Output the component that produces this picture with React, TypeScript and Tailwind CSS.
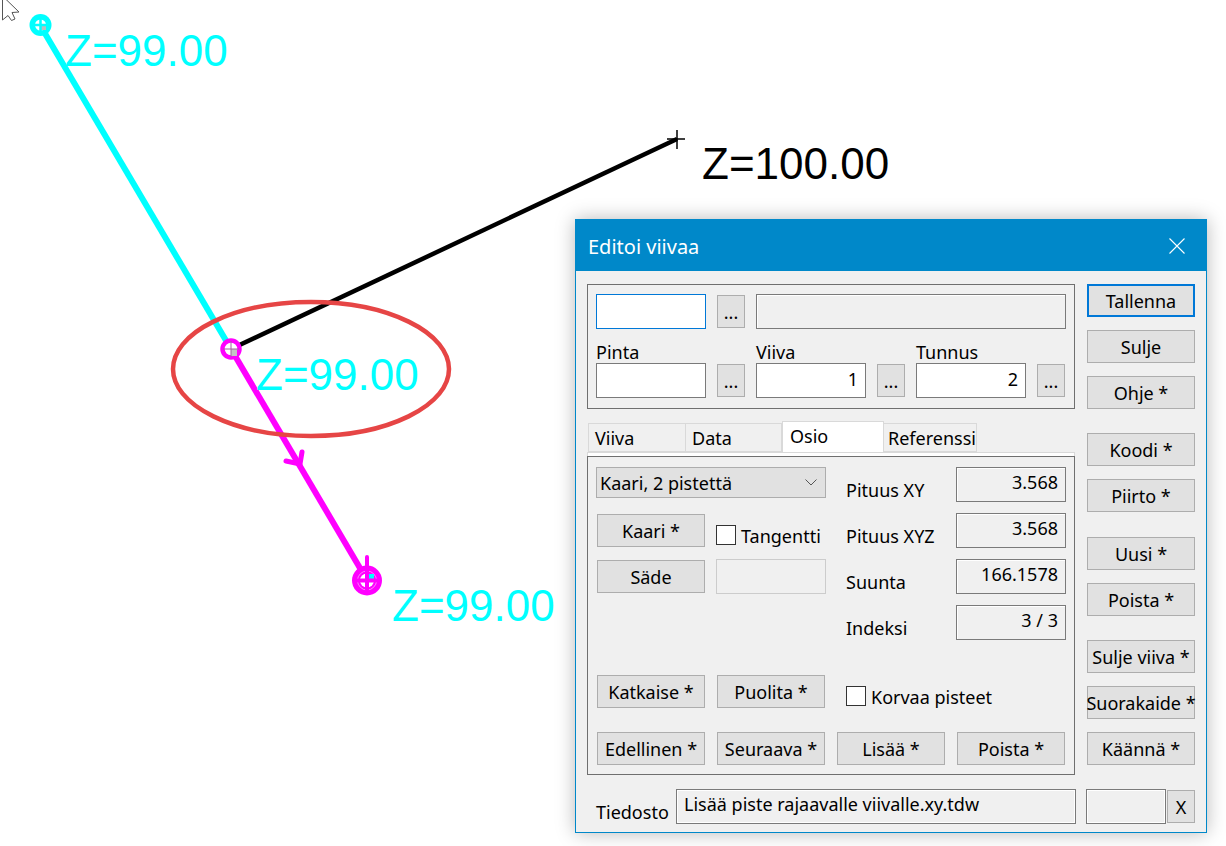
const font = "font-['Noto_Sans',sans-serif]";

function Btn({ label, className = "border border-[#adadad]" }: { label: string; className?: string }) {
  return (
    <div className={`flex h-[33px] w-[108px] shrink-0 items-center justify-center whitespace-nowrap bg-[#e1e1e1] text-[18px] leading-none text-black ${className}`}>
      {label}
    </div>
  );
}

function Dots({ className = "" }: { className?: string }) {
  return (
    <div className={`flex h-[33px] w-[28px] shrink-0 items-center justify-center border border-[#adadad] bg-[#e1e1e1] text-[18px] leading-none text-black ${className}`}>
      ...
    </div>
  );
}

function Input({ value = "", w, className = "border-[#7a7a7a]" }: { value?: string; w: string; className?: string }) {
  return (
    <div className={`flex h-[35px] shrink-0 items-center justify-end border bg-white pb-[4px] pr-[7px] text-[18px] leading-none text-black ${w} ${className}`}>
      {value}
    </div>
  );
}

function Readout({ value }: { value: string }) {
  return (
    <div className="flex h-[35px] w-[110px] items-start justify-end border border-[#7a7a7a] bg-[#f0f0f0] pr-[7px] pt-[5px] text-[18px] leading-none text-black shadow-[inset_1px_1px_0_#fff]">
      {value}
    </div>
  );
}

function Check({ label }: { label: string }) {
  return (
    <div className="flex items-start gap-[5px] text-[18px] leading-none text-black">
      <div className="h-[20px] w-[20px] border border-[#333] bg-white" />
      <span className="whitespace-nowrap pt-[2px]">{label}</span>
    </div>
  );
}

function Canvas() {
  return (
    <svg className="absolute left-0 top-0" width="1226" height="846" viewBox="0 0 1226 846">
      <path d="M40 25 L231 349" stroke="#00ffff" strokeWidth="6" />
      <path d="M231 349 L677 139" stroke="#000" strokeWidth="4.5" />
      <path d="M231 349 L367 580" stroke="#ff00ff" strokeWidth="6" />
      <path d="M677 130 V149 M667 139 H685" stroke="#000" strokeWidth="1.5" />
      <circle cx="40.5" cy="25" r="11" fill="#00ffff" />
      <circle cx="40.5" cy="25" r="5.5" fill="#fff" />
      <path d="M41 25 H46 V30 H41 Z" fill="#bdbdbd" />
      <path d="M40.5 18 V32 M33 25 H48" stroke="#00ffff" strokeWidth="2.5" />
      <ellipse cx="311" cy="369" rx="138" ry="67" fill="none" stroke="#e64545" strokeWidth="4.5" />
      <circle cx="231" cy="349" r="8.5" fill="#fff" stroke="#ff00ff" strokeWidth="4.5" />
      <path d="M231 349 H237 V356 H231 Z" fill="#c4c4c4" />
      <path d="M231 341 V357 M223 349 H239" stroke="#a060a0" strokeWidth="1" />
      <path d="M286 461 L300 464 L302 452" fill="none" stroke="#ff00ff" strokeWidth="5" strokeLinecap="round" />
      <circle cx="367" cy="580.5" r="15" fill="#ff00ff" />
      <circle cx="367" cy="580.5" r="9.5" fill="none" stroke="#ff9cff" strokeWidth="0.8" />
      <circle cx="367" cy="580.5" r="7" fill="#fff" />
      <path d="M368 574 H374 V579 H368 Z" fill="#00ffff" />
      <path d="M367 557 V590 M358 580.5 H376" stroke="#ff00ff" strokeWidth="4" strokeLinecap="round" />
      <path d="M2.5 -4 V20 L8 15.5 L11.5 20.5 L15 19 L12 12.5 L19 12 Z" fill="#fff" stroke="#555" strokeWidth="1" />
    </svg>
  );
}

function Label({ text, x, y, color }: { text: string; x: string; y: string; color: string }) {
  return (
    <div className={`absolute whitespace-nowrap font-['Liberation_Sans',sans-serif] text-[44px] leading-none ${x} ${y} ${color}`}>{text}</div>
  );
}

function Tab({ label, w, pad = "pl-[6px]", active }: { label: string; w: string; pad?: string; active?: boolean }) {
  return active ? (
    <div className={`-mt-[2px] flex h-[31px] items-center border border-b-0 border-[#d9d9d9] bg-white pb-[3px] pl-[7px] text-[18px] leading-none text-black ${w}`}>{label}</div>
  ) : (
    <div className={`flex h-[29px] items-center border border-l-0 border-[#d9d9d9] bg-[#f0f0f0] text-[18px] leading-none text-black first:border-l ${pad} ${w}`}>{label}</div>
  );
}

export default function App() {
  return (
    <div className={`relative h-[846px] w-[1226px] overflow-hidden bg-white ${font}`}>
      <Canvas />
      <Label text="Z=99.00" x="left-[65px]" y="top-[29px]" color="text-[#00ffff]" />
      <Label text="Z=100.00" x="left-[702px]" y="top-[142px]" color="text-black" />
      <Label text="Z=99.00" x="left-[256px]" y="top-[353px]" color="text-[#00ffff]" />
      <Label text="Z=99.00" x="left-[392px]" y="top-[584px]" color="text-[#00ffff]" />

      <div className="absolute left-[575px] top-[219px] flex h-[614px] w-[632px] flex-col border border-[#0088c9] bg-[#f0f0f0] shadow-[0_0_18px_rgba(0,0,0,0.28)]">
        <div className="flex h-[51px] shrink-0 items-center justify-between bg-[#0088c9] pl-[12px] pr-[21px] text-[20px] leading-none text-white">
          <span className="pt-[3px]">Editoi viivaa</span>
          <svg width="16" height="16" viewBox="0 0 16 16" stroke="#fff" strokeWidth="1.1" fill="none">
            <path d="M0.5 0.5 L15.5 15.5 M15.5 0.5 L0.5 15.5" />
          </svg>
        </div>

        <div className="flex pl-[11px] pt-[13px]">
          <div className="flex w-[488px] flex-col">
            <div className="flex h-[125px] flex-col border border-[#6f6f6f] pl-[8px] pt-[9px]">
              <div className="flex items-start gap-[11px]">
                <Input w="w-[110px]" className="border-[#0078d7]" />
                <Dots className="mt-[1px]" />
                <div className="h-[35px] w-[310px] border border-[#7a7a7a] bg-[#f0f0f0] shadow-[inset_1px_1px_0_#fff]" />
              </div>
              <div className="mt-[11px] flex items-end gap-[11px]">
                <div className="flex flex-col">
                  <div className="h-[23px] text-[18px] leading-[24px] text-black">Pinta</div>
                  <Input w="w-[110px]" />
                </div>
                <Dots className="mb-[1px]" />
                <div className="flex flex-col">
                  <div className="h-[23px] text-[18px] leading-[24px] text-black">Viiva</div>
                  <Input w="w-[110px]" value="1" />
                </div>
                <Dots className="mb-[1px]" />
                <div className="flex flex-col">
                  <div className="h-[23px] text-[18px] leading-[24px] text-black">Tunnus</div>
                  <Input w="w-[110px]" value="2" />
                </div>
                <Dots className="mb-[1px]" />
              </div>
            </div>

            <div className="mt-[14px] flex h-[29px] pl-[1px]">
              <Tab label="Viiva" w="w-[98px]" />
              <Tab label="Data" w="w-[96px]" />
              <Tab label="Osio" w="w-[102px]" active />
              <Tab label="Referenssi" w="w-[93px]" pad="pl-[4px]" />
            </div>
            <div className="h-[4px] border-x border-t border-[#d9d9d9] bg-white" />

            <div className="flex h-[319px] flex-col border border-[#6f6f6f] pl-[8px] pt-[10px]">
              <div className="flex">
                <div className="flex w-[240px] flex-col">
                  <div className="flex h-[31px] w-[230px] items-center justify-between border border-[#adadad] bg-[#e1e1e1] pl-[3px] pr-[8px] text-[18px] leading-none text-black">
                    <span>Kaari, 2 pistettä</span>
                    <svg width="12" height="7" viewBox="0 0 12 7" fill="none" stroke="#555" strokeWidth="1"><path d="M0.5 0.5 L6 6 L11.5 0.5" /></svg>
                  </div>
                  <div className="mt-[16px] flex items-start pl-[1px]">
                    <Btn label="Kaari *" />
                    <div className="ml-[11px] mt-[11px]"><Check label="Tangentti" /></div>
                  </div>
                  <div className="mt-[12px] flex items-center pl-[1px]">
                    <Btn label="Säde" />
                    <div className="ml-[11px] h-[35px] w-[110px] border border-[#cccccc] bg-[#f0f0f0]" />
                  </div>
                </div>
                <div className="flex flex-col gap-[11px] pl-[10px]">
                  {[["Pituus XY", "3.568"], ["Pituus XYZ", "3.568"], ["Suunta", "166.1578"], ["Indeksi", "3 / 3"]].map(([l, v]) => (
                    <div key={l} className="flex h-[35px] w-[220px] items-start">
                      <div className="w-[110px] pt-[14px] text-[18px] leading-none text-black">{l}</div>
                      <Readout value={v} />
                    </div>
                  ))}
                </div>
              </div>
              <div className="mt-[35px] flex items-start pl-[1px]">
                <Btn label="Katkaise *" />
                <Btn label="Puolita *" className="ml-[12px] border border-[#adadad]" />
                <div className="ml-[21px] mt-[11px]"><Check label="Korvaa pisteet" /></div>
              </div>
              <div className="mt-[24px] flex gap-[12px] pl-[1px]">
                <Btn label="Edellinen *" />
                <Btn label="Seuraava *" />
                <Btn label="Lisää *" />
                <Btn label="Poista *" />
              </div>
            </div>
          </div>

          <div className="ml-[12px] flex w-[108px] flex-col gap-[13px]">
            <Btn label="Tallenna" className="border-2 border-[#0078d7]" />
            <Btn label="Sulje" />
            <Btn label="Ohje *" />
            <Btn label="Koodi *" className="mt-[11px] border border-[#adadad]" />
            <Btn label="Piirto *" />
            <Btn label="Uusi *" className="mt-[12px] border border-[#adadad]" />
            <Btn label="Poista *" />
            <Btn label="Sulje viiva *" className="mt-[11px] border border-[#adadad]" />
            <Btn label="Suorakaide *" />
            <Btn label="Käännä *" />
          </div>
        </div>

        <div className="mt-[14px] flex items-start pl-[20px]">
          <div className="w-[80px] pt-[14px] text-[18px] leading-none text-black">Tiedosto</div>
          <div className="flex h-[35px] w-[400px] items-start border border-[#7a7a7a] bg-[#f0f0f0] pl-[7px] pt-[5px] text-[18px] leading-none text-black shadow-[inset_1px_1px_0_#fff,inset_-1px_-1px_0_#fff]">
            Lisää piste rajaavalle viivalle.xy.tdw
          </div>
          <div className="ml-[10px] h-[35px] w-[80px] border border-[#7a7a7a] bg-[#f0f0f0] shadow-[inset_1px_1px_0_#fff,inset_-1px_-1px_0_#fff]" />
          <div className="ml-[1px] mt-[1px] flex h-[33px] w-[28px] items-center justify-center border border-[#adadad] bg-[#e1e1e1] text-[18px] leading-none text-black">X</div>
        </div>
      </div>
    </div>
  );
}
